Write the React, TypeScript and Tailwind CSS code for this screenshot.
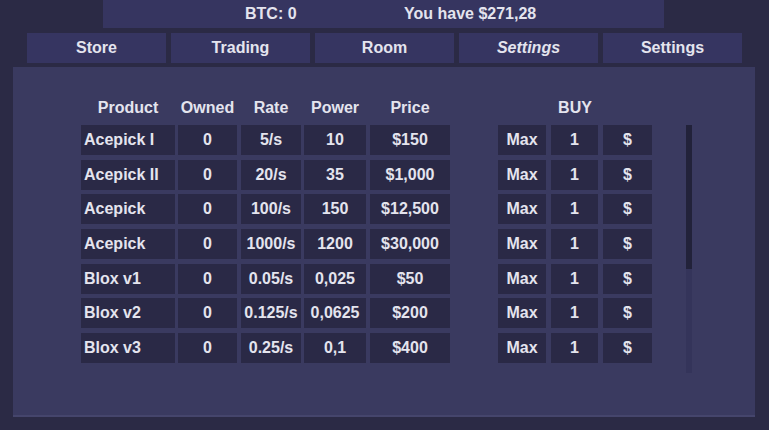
import React from "react";

const rows = [
  { name: "Acepick I", owned: "0", rate: "5/s", power: "10", price: "$150" },
  { name: "Acepick II", owned: "0", rate: "20/s", power: "35", price: "$1,000" },
  { name: "Acepick", owned: "0", rate: "100/s", power: "150", price: "$12,500" },
  { name: "Acepick", owned: "0", rate: "1000/s", power: "1200", price: "$30,000" },
  { name: "Blox v1", owned: "0", rate: "0.05/s", power: "0,025", price: "$50" },
  { name: "Blox v2", owned: "0", rate: "0.125/s", power: "0,0625", price: "$200" },
  { name: "Blox v3", owned: "0", rate: "0.25/s", power: "0,1", price: "$400" },
];

const tabs = [
  { label: "Store", italic: false },
  { label: "Trading", italic: false },
  { label: "Room", italic: false },
  { label: "Settings", italic: true },
  { label: "Settings", italic: false },
];

const cell = "h-[30px] bg-[#2a2946] flex items-center justify-center shrink-0";

const App = () => {
  return (
    <div
      className="w-[769px] h-[430px] overflow-hidden bg-[#2b2a45] text-[#e4e4ee] font-bold text-[16px] flex flex-col"
      style={{ fontFamily: '"Liberation Sans", Arial, sans-serif' }}
    >
      {/* top status bar */}
      <div className="ml-[103px] w-[561px] h-[28px] bg-[#363560] flex items-center">
        <span className="ml-[142px] w-[60px]">BTC: 0</span>
        <span className="ml-[99px]">You have $271,28</span>
      </div>

      {/* tabs */}
      <div className="mt-[5px] ml-[27px] flex gap-[5px]">
        {tabs.map((t, i) => (
          <div
            key={i}
            className={`w-[139px] h-[30px] bg-[#363561] flex items-center justify-center ${
              t.italic ? "italic" : ""
            }`}
          >
            {t.label}
          </div>
        ))}
      </div>

      {/* main panel */}
      <div className="mt-[4px] ml-[13px] w-[742px] h-[350px] bg-[#3a3a60] border-b-2 border-[#45456c] flex pl-[68px] pt-[32px]">
        <div className="flex flex-col">
          <div className="flex h-[18px] items-center">
            <div className="w-[94px] text-center">Product</div>
            <div className="w-[59px] ml-[3px] text-center">Owned</div>
            <div className="w-[60px] ml-[4px] text-center">Rate</div>
            <div className="w-[62px] ml-[3px] text-center">Power</div>
            <div className="w-[80px] ml-[4px] text-center">Price</div>
            <div className="w-[154px] ml-[48px] text-center">BUY</div>
          </div>
          <div className="mt-[8px] flex flex-col gap-[4.7px]">
            {rows.map((r, i) => (
              <div key={i} className="flex">
                <div className={`${cell} w-[94px] !justify-start pl-[3px]`}>{r.name}</div>
                <div className={`${cell} w-[59px] ml-[3px]`}>{r.owned}</div>
                <div className={`${cell} w-[60px] ml-[4px]`}>{r.rate}</div>
                <div className={`${cell} w-[62px] ml-[3px]`}>{r.power}</div>
                <div className={`${cell} w-[80px] ml-[4px]`}>{r.price}</div>
                <div className={`${cell} w-[48px] ml-[48px]`}>Max</div>
                <div className={`${cell} w-[47px] ml-[5px]`}>1</div>
                <div className={`${cell} w-[49px] ml-[5px]`}>$</div>
              </div>
            ))}
          </div>
        </div>

        {/* scrollbar */}
        <div className="ml-[34px] mt-[26px] w-[6px] h-[248px] bg-[#34345a] flex flex-col">
          <div className="h-[144px] bg-[#22223a]" />
        </div>
      </div>
    </div>
  );
};

export default App;
